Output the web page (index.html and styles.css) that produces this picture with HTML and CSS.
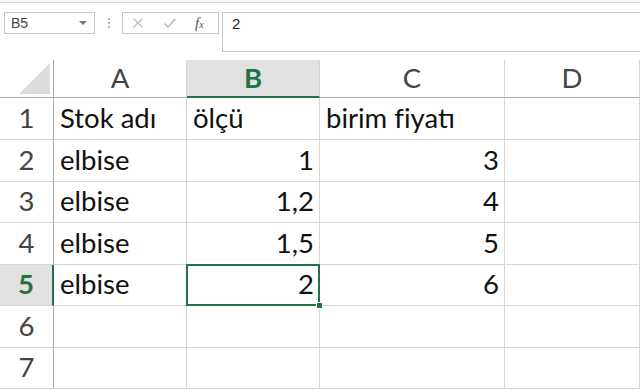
FILE: index.html
```html
<!DOCTYPE html>
<html lang="tr">
<head>
    <meta charset="UTF-8">
    <meta name="viewport" content="width=device-width, initial-scale=1.0">
    <title>Stok listesi</title>
    <link rel="stylesheet" href="styles.css">
</head>
<body>
    <div class="ribbon-edge"></div>

    <div class="formula-bar">
        <div class="name-box">
            <span>B5</span>
            <span class="arrow"></span>
        </div>
        <div class="grip">
            <i></i><i></i><i></i>
        </div>
        <div class="fx-buttons">
            <svg width="10" height="10" viewBox="0 0 10 10">
                <path d="M0.5 0.5 L9.5 9.5 M9.5 0.5 L0.5 9.5" stroke="#bdbdbd" stroke-width="1.2" fill="none"/>
            </svg>
            <svg width="12" height="10" viewBox="0 0 12 10">
                <path d="M0.5 5.5 L4 9 L11.5 0.8" stroke="#bdbdbd" stroke-width="1.6" fill="none"/>
            </svg>
            <span class="fx">f<small>x</small></span>
        </div>
        <div class="formula-input">2</div>
    </div>

    <div class="sheet">
        <div class="corner"><span class="triangle"></span></div>
        <div class="col-head">A</div>
        <div class="col-head active">B</div>
        <div class="col-head">C</div>
        <div class="col-head">D</div>

        <div class="row-head">1</div>
        <div class="cell">Stok adı</div>
        <div class="cell">ölçü</div>
        <div class="cell">birim fiyatı</div>
        <div class="cell"></div>

        <div class="row-head">2</div>
        <div class="cell">elbise</div>
        <div class="cell num">1</div>
        <div class="cell num">3</div>
        <div class="cell"></div>

        <div class="row-head">3</div>
        <div class="cell">elbise</div>
        <div class="cell num">1,2</div>
        <div class="cell num">4</div>
        <div class="cell"></div>

        <div class="row-head">4</div>
        <div class="cell">elbise</div>
        <div class="cell num">1,5</div>
        <div class="cell num">5</div>
        <div class="cell"></div>

        <div class="row-head active">5</div>
        <div class="cell">elbise</div>
        <div class="cell num selected">2<span class="handle"></span></div>
        <div class="cell num">6</div>
        <div class="cell"></div>

        <div class="row-head">6</div>
        <div class="cell"></div>
        <div class="cell"></div>
        <div class="cell"></div>
        <div class="cell"></div>

        <div class="row-head">7</div>
        <div class="cell"></div>
        <div class="cell"></div>
        <div class="cell"></div>
        <div class="cell"></div>
    </div>
</body>
</html>
```

FILE: styles.css
```css
body {
    margin: 0;
    width: 640px;
    height: 392px;
    overflow: hidden;
    background: #fff;
    font-family: "Liberation Sans", Arial, sans-serif;
}
.ribbon-edge {
    height: 2px;
    border-bottom: 1px solid #d9d9d9;
    background: #f6f6f6;
}
.formula-bar {
    display: flex;
    align-items: flex-start;
    padding: 9px 0 0 4px;
    height: 57px;
    box-sizing: border-box;
}
.name-box {
    width: 91px;
    height: 22px;
    box-sizing: border-box;
    border: 1px solid #c6c6c6;
    display: flex;
    align-items: center;
    justify-content: space-between;
    padding: 0 7px 0 6px;
    font-size: 14px;
    color: #444;
}
.arrow {
    width: 0;
    height: 0;
    border-left: 4px solid transparent;
    border-right: 4px solid transparent;
    border-top: 4px solid #777;
}
.grip {
    width: 27px;
    height: 22px;
    display: flex;
    flex-direction: column;
    align-items: center;
    justify-content: center;
    gap: 2px;
}
.grip i {
    width: 2px;
    height: 2px;
    background: #b5b5b5;
}
.fx-buttons {
    width: 97px;
    height: 22px;
    box-sizing: border-box;
    border: 1px solid #c6c6c6;
    display: flex;
    align-items: center;
    padding: 0 0 0 10px;
    gap: 21px;
}
.fx {
    font-family: "Liberation Serif", serif;
    font-style: italic;
    font-size: 15px;
    color: #555;
    margin-left: -2px;
}
.fx small {
    font-size: 10px;
}
.formula-input {
    flex: 1;
    margin-left: 3px;
    height: 40px;
    box-sizing: border-box;
    border: 1px solid #c6c6c6;
    border-right: none;
    padding: 2px 9px;
    font-size: 15px;
    color: #222;
}
.sheet {
    display: grid;
    grid-template-columns: 54px 133px 133px 185px 135px;
    grid-template-rows: 38px 42px 42px 41px 42px 41px 42px 41px;
    font-family: Lato, "Liberation Sans", sans-serif;
    font-size: 27.5px;
}
.corner {
    border-right: 1px solid #ababab;
    border-bottom: 1px solid #ababab;
    position: relative;
}
.triangle {
    position: absolute;
    right: 3px;
    bottom: 3px;
    width: 0;
    height: 0;
    border-left: 31px solid transparent;
    border-bottom: 31px solid #dcdcdc;
}
.col-head {
    display: flex;
    align-items: flex-end;
    justify-content: center;
    padding-bottom: 3px;
    border-right: 1px solid #d5d5d5;
    border-bottom: 1px solid #ababab;
    color: #444;
}
.col-head.active {
    background: #e1e1e1;
    color: #217346;
    font-weight: bold;
    border-bottom: 2px solid #217346;
    padding-bottom: 2px;
}
.row-head {
    display: flex;
    align-items: flex-end;
    justify-content: center;
    padding-bottom: 5px;
    border-right: 1px solid #ababab;
    border-bottom: 1px solid #d5d5d5;
    color: #444;
}
.row-head.active {
    background: #e1e1e1;
    color: #217346;
    font-weight: bold;
    border-right: 2px solid #217346;
}
.cell {
    display: flex;
    align-items: flex-end;
    padding: 0 5px 5px 6px;
    border-right: 1px solid #d5d5d5;
    border-bottom: 1px solid #d5d5d5;
    color: #111;
    white-space: nowrap;
}
.cell.num {
    justify-content: flex-end;
}
.selected {
    position: relative;
}
.selected::after {
    content: "";
    position: absolute;
    left: -1px;
    top: -1px;
    right: -1px;
    bottom: -1px;
    border: 2px solid #217346;
}
.handle {
    position: absolute;
    right: -4px;
    bottom: -4px;
    width: 5px;
    height: 5px;
    background: #217346;
    border: 1px solid #fff;
    z-index: 1;
}
```
